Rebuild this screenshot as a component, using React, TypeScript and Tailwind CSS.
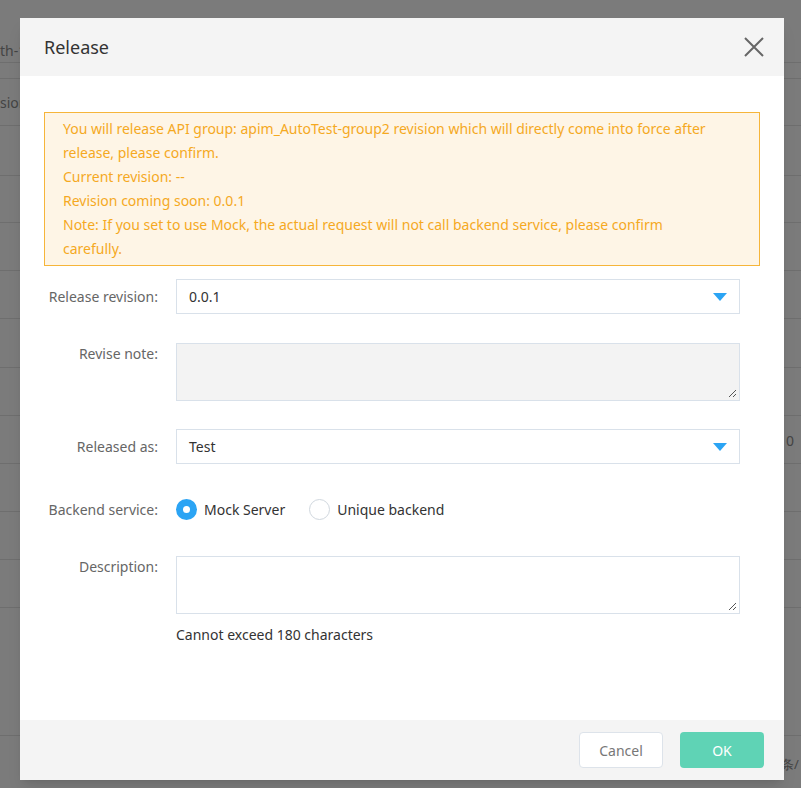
import React from "react";

const rows = [62, 78, 125, 175, 222, 270, 318, 367, 415, 463, 511, 559, 607, 735];

function Select({ value }: { value: string }) {
  return (
    <div className="flex h-[35px] w-[564px] items-center justify-between border border-[#d9e1ea] bg-white pl-3 pr-3 text-[14px] text-[#333]">
      <span>{value}</span>
      <svg width="14" height="8" viewBox="0 0 14 8">
        <path d="M0 0h14L7 8z" fill="#2ba4f4" />
      </svg>
    </div>
  );
}

function Row({ label, children, top = "items-center" }: { label: string; children: React.ReactNode; top?: string }) {
  return (
    <div className={`flex ${top}`}>
      <div className="w-[132px] shrink-0 whitespace-nowrap pr-[18px] text-right text-[14px] text-[#666]">{label}</div>
      {children}
    </div>
  );
}

export default function App() {
  return (
    <div className="relative h-[788px] w-[801px] overflow-hidden bg-[#7b7b7b] font-['Noto_Sans',sans-serif]">
      {rows.map((y) => (
        <div key={y} className="absolute left-0 right-0 h-px bg-[#6e6e6e]" style={{ top: y }} />
      ))}
      <div className="absolute left-0 top-[40px] text-[14px] text-[#444]">th-1</div>
      <div className="absolute left-0 top-[92px] text-[14px] text-[#444]">sion</div>
      <div className="absolute left-[786px] top-[430px] text-[14px] text-[#444]">0</div>
      <div className="absolute left-[781px] top-[755px] text-[13px] text-[#444]">条/</div>

      <div className="absolute left-[20px] top-[18px] flex h-[762px] w-[764px] flex-col bg-white shadow-lg">
        <div className="flex h-[58px] shrink-0 items-center justify-between bg-[#f4f4f4] pl-6 pr-5">
          <span className="text-[18px] text-[#333]">Release</span>
          <svg width="20" height="20" viewBox="0 0 20 20">
            <path d="M1 1l18 18M19 1L1 19" stroke="#666" strokeWidth="2" />
          </svg>
        </div>
        <div className="flex flex-1 flex-col px-6 pt-9">
          <div className="border border-[#f6b53a] bg-[#fef5e6] py-[4px] pl-[18px] pr-[50px] text-[14px] leading-[24px] text-[#f5a91f]">
            <p>You will release API group: apim_AutoTest-group2 revision which will directly come into force after release, please confirm.</p>
            <p>Current revision: --</p>
            <p>Revision coming soon: 0.0.1</p>
            <p>Note: If you set to use Mock, the actual request will not call backend service, please confirm carefully.</p>
          </div>
          <div className="mt-[13px] flex flex-col">
            <Row label="Release revision:">
              <Select value="0.0.1" />
            </Row>
            <div className="mt-[29px]">
              <Row label="Revise note:" top="items-start">
                <div className="relative h-[58px] w-[564px] border border-[#d9e1ea] bg-[#f3f3f3]">
                  <ResizeGrip />
                </div>
              </Row>
            </div>
            <div className="mt-[28px]">
              <Row label="Released as:">
                <Select value="Test" />
              </Row>
            </div>
            <div className="mt-[35px]">
              <Row label="Backend service:">
                <div className="flex items-center text-[14px] text-[#333]">
                  <span className="flex h-[21px] w-[21px] items-center justify-center rounded-full bg-[#2ba4f4]">
                    <span className="h-[7px] w-[7px] rounded-full bg-white" />
                  </span>
                  <span className="ml-[7px]">Mock Server</span>
                  <span className="ml-[24px] h-[21px] w-[21px] rounded-full border border-[#d0d7de] bg-white" />
                  <span className="ml-[7px]">Unique backend</span>
                </div>
              </Row>
            </div>
            <div className="mt-[36px]">
              <Row label="Description:" top="items-start">
                <div className="flex flex-col">
                  <div className="relative h-[58px] w-[564px] border border-[#d9e1ea] bg-white">
                    <ResizeGrip />
                  </div>
                  <span className="mt-[10px] text-[14px] text-[#333]">Cannot exceed 180 characters</span>
                </div>
              </Row>
            </div>
          </div>
        </div>
        <div className="flex h-[60px] shrink-0 items-center justify-end gap-[17px] bg-[#f4f4f4] pr-5">
          <button className="h-[36px] w-[84px] rounded border border-[#dde3ea] bg-white text-[14px] text-[#777]">Cancel</button>
          <button className="h-[36px] w-[84px] rounded bg-[#5fd3b5] text-[14px] text-white">OK</button>
        </div>
      </div>
    </div>
  );
}

function ResizeGrip() {
  return (
    <svg className="absolute bottom-[2px] right-[2px]" width="9" height="9" viewBox="0 0 9 9">
      <path d="M8 1L1 8M8 5L5 8" stroke="#555" strokeWidth="1" />
    </svg>
  );
}
